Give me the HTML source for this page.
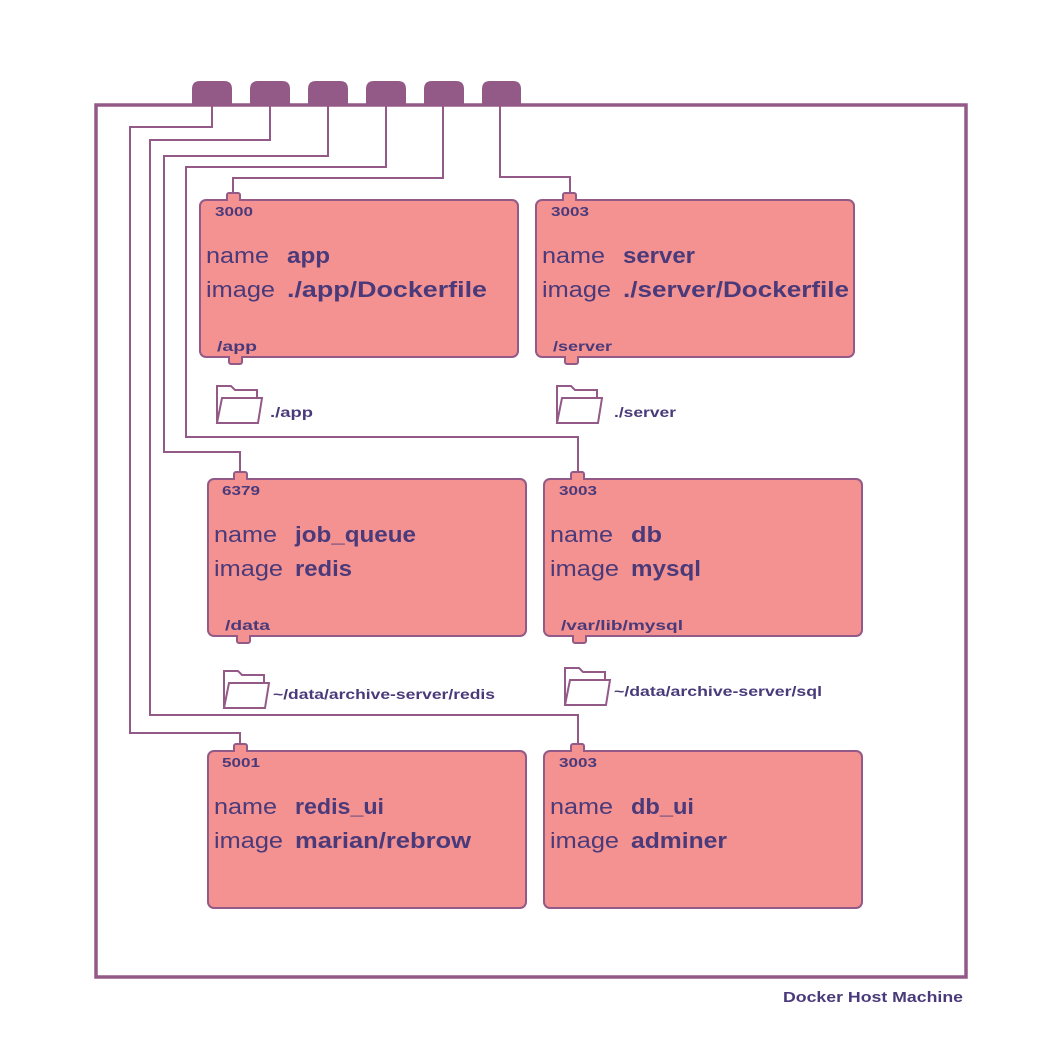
<!DOCTYPE html>
<html><head><style>
html,body{margin:0;padding:0;background:#fff;}
svg{display:block;}
text{font-family:"Liberation Sans",sans-serif;fill:#4a3a7a;}
.p{font-weight:bold;font-size:13px;}
.l{font-size:22px;}
.v{font-size:22px;font-weight:bold;}
.f{font-weight:bold;font-size:14px;}
</style></head><body>
<svg width="1061" height="1059" viewBox="0 0 1061 1059" xmlns="http://www.w3.org/2000/svg">
<rect width="1061" height="1059" fill="#fff"/>
<g fill="#935a88">
<path d="M192,104 V89 Q192,81 200,81 H224 Q232,81 232,89 V104Z"/>
<path d="M250,104 V89 Q250,81 258,81 H282 Q290,81 290,89 V104Z"/>
<path d="M308,104 V89 Q308,81 316,81 H340 Q348,81 348,89 V104Z"/>
<path d="M366,104 V89 Q366,81 374,81 H398 Q406,81 406,89 V104Z"/>
<path d="M424,104 V89 Q424,81 432,81 H456 Q464,81 464,89 V104Z"/>
<path d="M482,104 V89 Q482,81 490,81 H513 Q521,81 521,89 V104Z"/>
</g>
<rect x="96" y="105" width="870" height="872" fill="none" stroke="#935a88" stroke-width="3.5"/>
<g fill="none" stroke="#935a88" stroke-width="2">
<path d="M212,104 V127 H130 V733 H240 V745"/>
<path d="M270,104 V140 H150 V715 H578 V745"/>
<path d="M328,104 V156 H164 V452 H240 V473"/>
<path d="M386,104 V167 H186 V437 H578 V473"/>
<path d="M443,104 V178 H233 V194"/>
<path d="M500,104 V177 H570 V194"/>
</g>
<g stroke="#935a88" stroke-width="2" fill="#f49191">
<rect x="227" y="193" width="13" height="9" rx="2"/>
<rect x="563" y="193" width="13" height="9" rx="2"/>
<rect x="234" y="472" width="13" height="9" rx="2"/>
<rect x="571" y="472" width="13" height="9" rx="2"/>
<rect x="234" y="744" width="13" height="9" rx="2"/>
<rect x="571" y="744" width="13" height="9" rx="2"/>
<rect x="229" y="355" width="13" height="9" rx="2"/>
<rect x="565" y="355" width="13" height="9" rx="2"/>
<rect x="237" y="634" width="13" height="9" rx="2"/>
<rect x="573" y="634" width="13" height="9" rx="2"/>
<rect x="200" y="200" width="318" height="157" rx="6"/>
<rect x="536" y="200" width="318" height="157" rx="6"/>
<rect x="208" y="479" width="318" height="157" rx="6"/>
<rect x="544" y="479" width="318" height="157" rx="6"/>
<rect x="208" y="751" width="318" height="157" rx="6"/>
<rect x="544" y="751" width="318" height="157" rx="6"/>
</g>
<g fill="#f49191">
<rect x="228" y="199" width="11" height="4"/><rect x="564" y="199" width="11" height="4"/>
<rect x="235" y="478" width="11" height="4"/><rect x="572" y="478" width="11" height="4"/>
<rect x="235" y="750" width="11" height="4"/><rect x="572" y="750" width="11" height="4"/>
<rect x="230" y="354" width="11" height="4"/><rect x="566" y="354" width="11" height="4"/>
<rect x="238" y="633" width="11" height="4"/><rect x="574" y="633" width="11" height="4"/>
</g>
<g lengthAdjust="spacingAndGlyphs">
<text class="p" x="215" y="216" textLength="38" lengthAdjust="spacingAndGlyphs">3000</text>
<text class="l" x="206" y="263" textLength="63" lengthAdjust="spacingAndGlyphs">name</text><text class="v" x="287" y="263" textLength="43" lengthAdjust="spacingAndGlyphs">app</text>
<text class="l" x="206" y="297" textLength="69" lengthAdjust="spacingAndGlyphs">image</text><text class="v" x="287" y="297" textLength="200" lengthAdjust="spacingAndGlyphs">./app/Dockerfile</text>
<text class="f" x="217" y="351" textLength="40" lengthAdjust="spacingAndGlyphs">/app</text>
<text class="p" x="551" y="216" textLength="38" lengthAdjust="spacingAndGlyphs">3003</text>
<text class="l" x="542" y="263" textLength="63" lengthAdjust="spacingAndGlyphs">name</text><text class="v" x="623" y="263" textLength="72" lengthAdjust="spacingAndGlyphs">server</text>
<text class="l" x="542" y="297" textLength="69" lengthAdjust="spacingAndGlyphs">image</text><text class="v" x="623" y="297" textLength="226" lengthAdjust="spacingAndGlyphs">./server/Dockerfile</text>
<text class="f" x="553" y="351" textLength="59" lengthAdjust="spacingAndGlyphs">/server</text>
<text class="p" x="222" y="495" textLength="38" lengthAdjust="spacingAndGlyphs">6379</text>
<text class="l" x="214" y="542" textLength="63" lengthAdjust="spacingAndGlyphs">name</text><text class="v" x="295" y="542" textLength="121" lengthAdjust="spacingAndGlyphs">job_queue</text>
<text class="l" x="214" y="576" textLength="69" lengthAdjust="spacingAndGlyphs">image</text><text class="v" x="295" y="576" textLength="57" lengthAdjust="spacingAndGlyphs">redis</text>
<text class="f" x="225" y="630" textLength="45" lengthAdjust="spacingAndGlyphs">/data</text>
<text class="p" x="559" y="495" textLength="38" lengthAdjust="spacingAndGlyphs">3003</text>
<text class="l" x="550" y="542" textLength="63" lengthAdjust="spacingAndGlyphs">name</text><text class="v" x="631" y="542" textLength="31" lengthAdjust="spacingAndGlyphs">db</text>
<text class="l" x="550" y="576" textLength="69" lengthAdjust="spacingAndGlyphs">image</text><text class="v" x="631" y="576" textLength="70" lengthAdjust="spacingAndGlyphs">mysql</text>
<text class="f" x="561" y="630" textLength="122" lengthAdjust="spacingAndGlyphs">/var/lib/mysql</text>
<text class="p" x="222" y="767" textLength="38" lengthAdjust="spacingAndGlyphs">5001</text>
<text class="l" x="214" y="814" textLength="63" lengthAdjust="spacingAndGlyphs">name</text><text class="v" x="295" y="814" textLength="89" lengthAdjust="spacingAndGlyphs">redis_ui</text>
<text class="l" x="214" y="848" textLength="69" lengthAdjust="spacingAndGlyphs">image</text><text class="v" x="295" y="848" textLength="176" lengthAdjust="spacingAndGlyphs">marian/rebrow</text>
<text class="p" x="559" y="767" textLength="38" lengthAdjust="spacingAndGlyphs">3003</text>
<text class="l" x="550" y="814" textLength="63" lengthAdjust="spacingAndGlyphs">name</text><text class="v" x="631" y="814" textLength="63" lengthAdjust="spacingAndGlyphs">db_ui</text>
<text class="l" x="550" y="848" textLength="69" lengthAdjust="spacingAndGlyphs">image</text><text class="v" x="631" y="848" textLength="96" lengthAdjust="spacingAndGlyphs">adminer</text>
</g>
<g fill="#fff" stroke="#935a88" stroke-width="2">
<g transform="translate(216,385)"><path d="M1,38 V1 H15 L19,5 H41 V13"/><path d="M1,38 L6,13 H46 L42,38 Z"/></g>
<g transform="translate(556,385)"><path d="M1,38 V1 H15 L19,5 H41 V13"/><path d="M1,38 L6,13 H46 L42,38 Z"/></g>
<g transform="translate(223,670)"><path d="M1,38 V1 H15 L19,5 H41 V13"/><path d="M1,38 L6,13 H46 L42,38 Z"/></g>
<g transform="translate(564,667)"><path d="M1,38 V1 H15 L19,5 H41 V13"/><path d="M1,38 L6,13 H46 L42,38 Z"/></g>
</g>
<text class="f" x="270" y="417" textLength="43" lengthAdjust="spacingAndGlyphs">./app</text>
<text class="f" x="614" y="417" textLength="62" lengthAdjust="spacingAndGlyphs">./server</text>
<text class="f" x="273" y="699" textLength="222" lengthAdjust="spacingAndGlyphs">~/data/archive-server/redis</text>
<text class="f" x="614" y="696" textLength="208" lengthAdjust="spacingAndGlyphs">~/data/archive-server/sql</text>
<text class="f" x="783" y="1002" style="font-size:15px" textLength="180" lengthAdjust="spacingAndGlyphs">Docker Host Machine</text>
</svg>
</body></html>
